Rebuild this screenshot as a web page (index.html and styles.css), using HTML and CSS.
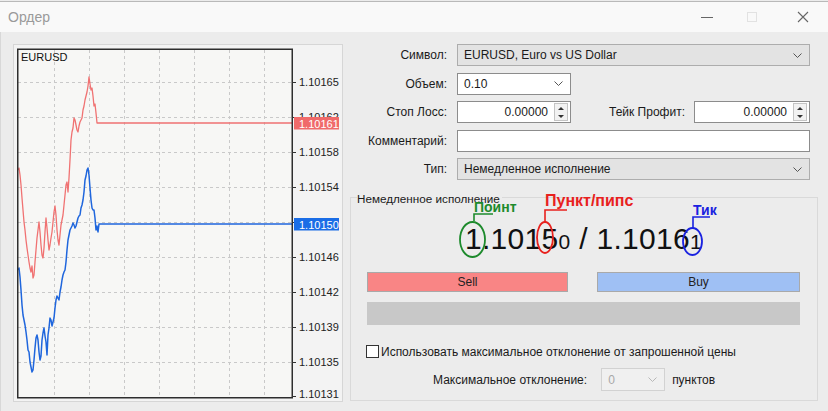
FILE: index.html
```html
<!DOCTYPE html>
<html lang="ru">
<head>
<meta charset="utf-8">
<title>Ордер</title>
<link rel="stylesheet" href="styles.css">
</head>
<body>
<div class="window">
  <div class="titlebar">
    <span class="title">Ордер</span>
    <div class="controls">
      <svg class="ctl" width="12" height="12" viewBox="0 0 12 12"><line x1="0" y1="6.5" x2="12" y2="6.5" stroke="#666" stroke-width="1"/></svg>
      <svg class="ctl" width="12" height="12" viewBox="0 0 12 12"><rect x="1.5" y="1.5" width="9" height="9" fill="none" stroke="#e2e2e2" stroke-width="1"/></svg>
      <svg class="ctl" width="12" height="12" viewBox="0 0 12 12"><path d="M1 1 L11 11 M11 1 L1 11" stroke="#666" stroke-width="1.1"/></svg>
    </div>
  </div>
  <div class="body">
    <div class="chart-panel">
      <svg width="330" height="358" viewBox="12 44 330 358">
        <rect x="12.5" y="44.5" width="329" height="357" fill="#f3f3f3" stroke="#d6d6d6"/>
        <rect x="16.5" y="49" width="274.5" height="348.5" fill="#f7f7f5"/>
        <g stroke="#c9c9c9" stroke-width="1" stroke-dasharray="3 3">
          <line x1="53.5" y1="50" x2="53.5" y2="397"/>
          <line x1="88.5" y1="50" x2="88.5" y2="397"/>
          <line x1="123.5" y1="50" x2="123.5" y2="397"/>
          <line x1="158.5" y1="50" x2="158.5" y2="397"/>
          <line x1="193.5" y1="50" x2="193.5" y2="397"/>
          <line x1="228.5" y1="50" x2="228.5" y2="397"/>
          <line x1="263.5" y1="50" x2="263.5" y2="397"/>
          <line x1="17" y1="82.5" x2="291" y2="82.5"/>
          <line x1="17" y1="117.5" x2="291" y2="117.5"/>
          <line x1="17" y1="152.5" x2="291" y2="152.5"/>
          <line x1="17" y1="187.5" x2="291" y2="187.5"/>
          <line x1="17" y1="222.5" x2="291" y2="222.5"/>
          <line x1="17" y1="257.5" x2="291" y2="257.5"/>
          <line x1="17" y1="292.5" x2="291" y2="292.5"/>
          <line x1="17" y1="327.5" x2="291" y2="327.5"/>
          <line x1="17" y1="362.5" x2="291" y2="362.5"/>
        </g>
        <polyline fill="none" stroke="#f07272" stroke-width="1.3" stroke-linejoin="round" points="17,170 18,168 19,175 20,185 21,198 22,210 23,222 24,230 25,240 26,248 27,255 28,262 29,268 30,272 31,266 32,278 33,275 34,262 35,250 36,238 37,230 38,222 39,232 40,245 41,255 42,258 43,248 44,232 45,218 46,228 47,240 48,250 49,245 50,238 51,232 52,222 53,212 54,206 55,215 56,230 57,240 58,245 59,235 60,225 61,220 62,215 63,205 64,195 65,185 66,182 67,192 68,178 69,160 70,140 71,132 72,128 73,118 74,120 75,125 76,130 77,132 78,126 79,122 80,120 81,118 82,110 83,106 84,100 85,96 86,92 87,86 88,77 89,84 90,90 91,88 92,96 93,106 94,104 95,113 96,123 291,123"/>
        <polyline fill="none" stroke="#1f66dd" stroke-width="1.5" stroke-linejoin="round" points="17,270 18,268 19,277 20,290 21,305 22,315 23,320 24,325 25,332 26,340 27,350 28,352 29,362 30,367 31,372 32,370 33,360 34,348 35,338 36,335 37,340 38,352 39,360 40,356 41,340 42,333 43,328 44,336 45,342 46,355 47,335 48,328 49,318 50,320 51,326 52,322 53,318 54,308 55,300 56,296 57,298 58,300 59,292 60,287 61,280 62,275 63,272 64,270 65,262 66,250 67,240 68,235 69,230 70,228 71,226 72,223 73,225 74,228 75,226 76,222 77,218 78,216 79,215 80,208 81,205 82,200 83,192 84,180 85,176 86,170 87,168 88,175 89,188 90,200 91,208 92,210 93,210 94,218 95,230 96,226 97,232 98,224 291,224"/>
        <rect x="16.75" y="49.25" width="274.5" height="348.5" fill="none" stroke="#2e2e2e" stroke-width="1.5"/>
        <text x="20" y="61" class="sym">EURUSD</text>
        <g stroke="#333" stroke-width="1">
          <line x1="291" y1="82.5" x2="295" y2="82.5"/>
          <line x1="291" y1="117.5" x2="295" y2="117.5"/>
          <line x1="291" y1="152.5" x2="295" y2="152.5"/>
          <line x1="291" y1="187.5" x2="295" y2="187.5"/>
          <line x1="291" y1="222.5" x2="295" y2="222.5"/>
          <line x1="291" y1="257.5" x2="295" y2="257.5"/>
          <line x1="291" y1="292.5" x2="295" y2="292.5"/>
          <line x1="291" y1="327.5" x2="295" y2="327.5"/>
          <line x1="291" y1="362.5" x2="295" y2="362.5"/>
          <line x1="291" y1="396.5" x2="295" y2="396.5"/>
        </g>
        <g class="axis">
          <text x="298" y="86">1.10165</text>
          <text x="298" y="121">1.10162</text>
          <text x="298" y="156">1.10158</text>
          <text x="298" y="191">1.10154</text>
          <text x="298" y="261">1.10146</text>
          <text x="298" y="296">1.10142</text>
          <text x="298" y="331">1.10139</text>
          <text x="298" y="366">1.10135</text>
          <text x="298" y="398">1.10131</text>
        </g>
        <rect x="293" y="117" width="45" height="12.5" fill="#f06a6a"/>
        <text x="298" y="127.5" class="tag">1.10161</text>
        <rect x="293" y="218" width="45" height="12.5" fill="#1a6de6"/>
        <text x="298" y="228.5" class="tag">1.10150</text>
      </svg>
    </div>
    <div class="right">
      <div class="form">
        <label class="lbl">Символ:</label>
        <div class="select gray"><span>EURUSD, Euro vs US Dollar</span><svg class="chev" width="9" height="5" viewBox="0 0 9 5"><polyline points="0.5,0.5 4.5,4.5 8.5,0.5" fill="none" stroke="#555" stroke-width="1"/></svg></div>

        <label class="lbl">Объем:</label>
        <div class="select white short"><span>0.10</span><svg class="chev" width="9" height="5" viewBox="0 0 9 5"><polyline points="0.5,0.5 4.5,4.5 8.5,0.5" fill="none" stroke="#555" stroke-width="1"/></svg></div>

        <label class="lbl">Стоп Лосс:</label>
        <div class="pair">
          <div class="spin short">
            <span class="val">0.00000</span>
            <span class="arrows"><span class="up"></span><span class="down"></span></span>
          </div>
          <label class="lbl2">Тейк Профит:</label>
          <div class="spin tp">
            <span class="val">0.00000</span>
            <span class="arrows"><span class="up"></span><span class="down"></span></span>
          </div>
        </div>

        <label class="lbl">Комментарий:</label>
        <div class="input"></div>

        <label class="lbl">Тип:</label>
        <div class="select gray"><span>Немедленное исполнение</span><svg class="chev" width="9" height="5" viewBox="0 0 9 5"><polyline points="0.5,0.5 4.5,4.5 8.5,0.5" fill="none" stroke="#555" stroke-width="1"/></svg></div>
      </div>

      <div class="group">
        <span class="legend">Немедленное исполнение</span>
        <div class="quote">
          <div class="prices">1.1015<span class="small">0</span> / 1.1016<span class="small">1</span></div>
          <svg class="notes" width="433" height="87" viewBox="367 185 433 87">
            <text x="474" y="212" class="note green">Поинт</text>
            <polyline points="493,214 474,214 474,221" fill="none" stroke="#1d8a2c" stroke-width="1.6"/>
            <ellipse cx="472.5" cy="239.5" rx="12.5" ry="17.5" fill="none" stroke="#1d8a2c" stroke-width="1.8"/>
            <text x="545" y="205.5" class="note red">Пункт/пипс</text>
            <polyline points="567,210 545,210 545,223" fill="none" stroke="#e8211d" stroke-width="1.6"/>
            <ellipse cx="545" cy="237.5" rx="8" ry="15.5" fill="none" stroke="#e8211d" stroke-width="1.8"/>
            <text x="693" y="215" class="note blue">Тик</text>
            <polyline points="710,217 693,217 693,228" fill="none" stroke="#1a22e0" stroke-width="1.6"/>
            <ellipse cx="692.5" cy="241.5" rx="9.5" ry="13.5" fill="none" stroke="#1a22e0" stroke-width="1.8"/>
          </svg>
        </div>
        <div class="buttons">
          <div class="btn sell">Sell</div>
          <div class="btn buy">Buy</div>
        </div>
        <div class="bar"></div>
        <div class="check-row">
          <span class="checkbox"></span>
          <span>Использовать максимальное отклонение от запрошенной цены</span>
        </div>
        <div class="dev-row">
          <span>Максимальное отклонение:</span>
          <div class="select disabled"><span>0</span><svg class="chev" width="9" height="5" viewBox="0 0 9 5"><polyline points="0.5,0.5 4.5,4.5 8.5,0.5" fill="none" stroke="#b8b8b8" stroke-width="1"/></svg></div>
          <span>пунктов</span>
        </div>
      </div>
    </div>
  </div>
</div>
</body>
</html>
```
FILE: styles.css
```css
* { box-sizing: border-box; }
html, body {
  margin: 0;
  padding: 0;
}
body {
  width: 828px;
  height: 411px;
  overflow: hidden;
  background: #ececec;
  font-family: "Liberation Sans", Arial, sans-serif;
  font-size: 12px;
  color: #1a1a1a;
}
.window {
  width: 828px;
  height: 411px;
  display: flex;
  flex-direction: column;
}
.titlebar {
  height: 31px;
  flex: none;
  background: #f9f9f9;
  border-top: 1px solid #b9b9b9;
  margin-top: 1px;
  display: flex;
  align-items: center;
}
.title {
  padding-left: 8px;
  font-size: 14px;
  color: #9a9a9a;
}
.controls {
  margin-left: auto;
  padding-right: 19px;
  display: flex;
  align-items: center;
  gap: 33px;
}
.controls .ctl:last-child { margin-left: 6px; }
.body {
  flex: 1;
  display: flex;
  padding: 12px 0 0 12px;
  border-left: 1px solid #d8d8d8;
}
.chart-panel {
  width: 330px;
  height: 358px;
  flex: none;
}
.chart-panel svg { display: block; }
.sym { font-family: "Liberation Sans", Arial, sans-serif; font-size: 11px; fill: #111; }
.axis text { font-family: "Liberation Sans", Arial, sans-serif; font-size: 11px; fill: #222; }
.tag { font-family: "Liberation Sans", Arial, sans-serif; font-size: 11px; fill: #fff; }

.right {
  width: 486px;
  padding: 0 10px 0 7px;
  flex: none;
}
.form {
  display: grid;
  grid-template-columns: 97px 353px;
  column-gap: 10px;
  row-gap: 6.5px;
  grid-auto-rows: 22px;
}
.lbl {
  display: flex;
  align-items: center;
  justify-content: flex-end;
  white-space: nowrap;
}
.select {
  display: flex;
  align-items: center;
  justify-content: space-between;
  padding: 0 7px 0 6px;
  border: 1px solid #adadad;
  height: 22px;
}
.select.gray { background: #e3e3e3; }
.select.white { background: #fff; border-color: #8c8c8c; }
.short { width: 114px; }
.chev { flex: none; }
.input {
  background: #fff;
  border: 1px solid #8c8c8c;
}
.pair {
  display: flex;
  align-items: stretch;
}
.spin {
  background: #fff;
  border: 1px solid #8c8c8c;
  display: flex;
  align-items: center;
  justify-content: flex-end;
  padding-right: 2px;
}
.spin.tp { width: 116px; }
.spin .val { padding-right: 6px; }
.arrows {
  width: 14px;
  height: 18px;
  border: 1px solid #c4c4c4;
  background: #f2f2f2;
  display: flex;
  flex-direction: column;
  align-items: center;
  justify-content: space-around;
}
.up, .down {
  width: 0;
  height: 0;
  border-left: 3px solid transparent;
  border-right: 3px solid transparent;
}
.up { border-bottom: 3px solid #333; }
.down { border-top: 3px solid #333; }
.lbl2 {
  flex: 1;
  display: flex;
  align-items: center;
  justify-content: flex-end;
  padding-right: 9px;
}

.group {
  position: relative;
  margin-top: 17px;
  margin-right: 1px;
  border: 1px solid #d9d9d9;
  padding: 0 17px 9px 16px;
  height: 204px;
}
.legend {
  position: absolute;
  top: -6px;
  left: 6px;
  font-size: 11.7px;
  line-height: 13px;
  background: #ececec;
  padding-right: 2px;
}
.quote {
  position: relative;
  height: 74px;
}
.prices {
  padding-top: 23px;
  text-align: center;
  font-size: 30px;
  line-height: 35px;
  letter-spacing: 0.3px;
  color: #111;
  white-space: nowrap;
}
.prices .small { font-size: 21px; }
.notes {
  position: absolute;
  left: 0;
  top: -13px;
  overflow: visible;
}
.note { font-family: "Liberation Sans", Arial, sans-serif; font-size: 14px; font-weight: bold; }
.note.green { fill: #1d8a2c; }
.note.red { fill: #e8211d; font-size: 16px; }
.note.blue { fill: #1a22e0; }

.buttons {
  display: flex;
  gap: 29px;
}
.btn {
  height: 20px;
  border: 1px solid #a9a9a9;
  display: flex;
  align-items: center;
  justify-content: center;
  color: #222;
}
.sell { width: 201px; background: #f98585; }
.buy { width: 203px; background: #9fc0f4; }
.bar {
  margin-top: 10px;
  height: 23px;
  background: #c8c8c8;
}
.check-row {
  margin-top: 20px;
  margin-left: -1px;
  display: flex;
  align-items: center;
  gap: 2px;
  height: 13px;
  white-space: nowrap;
}
.checkbox {
  width: 13px;
  height: 13px;
  border: 1px solid #333;
  background: #fff;
  flex: none;
}
.dev-row {
  margin-top: 10px;
  padding-left: 66px;
  display: flex;
  align-items: center;
  height: 23px;
  white-space: nowrap;
}
.dev-row .select.disabled {
  margin-left: 14px;
  margin-right: 7px;
  width: 64px;
  height: 23px;
  border-color: #d2d2d2;
  background: #f0f0f0;
  color: #a8a8a8;
}
```
